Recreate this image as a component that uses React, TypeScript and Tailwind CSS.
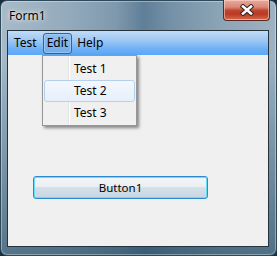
import React from "react";

export default function App() {
  return (
    <div className="w-[277px] h-[256px] bg-[#163041] overflow-hidden font-['Noto_Sans',sans-serif] text-[12px] text-black">
      <div className="relative w-[277px] h-[256px] rounded-[7px] border border-[#30495a] bg-[linear-gradient(180deg,rgba(150,175,192,0)_0%,rgba(150,175,192,0)_22%,rgba(30,70,95,0.6)_100%),linear-gradient(90deg,#a7bac8_0%,#93aabc_25%,#7e98ad_42%,#5f7f98_52%,#7591a7_62%,#8ca4b6_80%,#9eb2c1_100%)] flex flex-col pl-[6px] pr-[7px] pb-[8px] shadow-[inset_0_0_0_1px_rgba(255,255,255,0.35)]">
        {/* title bar */}
        <div className="h-[29px] flex items-start justify-between">
          <div className="pl-[2px] pt-[8px] leading-[14px] text-[12px] [text-shadow:0_0_6px_rgba(255,255,255,0.9),0_0_3px_rgba(255,255,255,0.8)]">
            Form1
          </div>
          <div className="-mt-[1px] -mr-[1px] w-[47px] h-[21px] rounded-b-[4px] border border-[#5a2a22] border-t-0 bg-[linear-gradient(180deg,#e7aa9c_0%,#d98a78_35%,#c4452e_52%,#b83a25_70%,#d86a4c_100%)] shadow-[inset_0_0_0_1px_rgba(255,220,210,0.55)] flex items-center justify-center">
            <svg width="14" height="12" viewBox="0 0 14 12">
              <path d="M3 2.5 L11 9.5 M11 2.5 L3 9.5" stroke="#3b2420" strokeWidth="4.6" strokeLinecap="square" />
              <path d="M3 2.5 L11 9.5 M11 2.5 L3 9.5" stroke="#ffffff" strokeWidth="2.6" strokeLinecap="square" />
            </svg>
          </div>
        </div>
        {/* client area */}
        <div className="relative flex-1 border border-[#26333c] bg-[#f0f0f0] flex flex-col">
          {/* menu bar */}
          <div className="h-[24px] bg-[linear-gradient(180deg,#c2dcf8_0%,#98c4f3_45%,#6eb0f6_75%,#5ca7f7_100%)] flex items-center pl-[2px] gap-[2px]">
            <div className="h-[20px] px-[4px] flex items-center">Test</div>
            <div className="h-[21px] px-[3px] flex items-center rounded-[3px] border border-[#3f6184] bg-[linear-gradient(180deg,#8ebfee_0%,#74adea_100%)] shadow-[inset_0_0_0_1px_rgba(170,210,245,0.6)]">
              Edit
            </div>
            <div className="h-[20px] px-[3px] flex items-center">Help</div>
          </div>

          {/* button */}
          <div className="ml-[25px] mt-[121px] w-[175px] h-[23px] rounded-[3px] border border-[#2a8ad4] shadow-[inset_0_0_0_1px_#66dcfb] bg-[linear-gradient(180deg,#f3f6f8_0%,#ebeff3_45%,#d5e0e8_50%,#c8d6e0_100%)] flex items-center justify-center text-[11.5px]">
            Button1
          </div>

          {/* dropdown menu */}
          <div className="absolute left-[34px] top-[24px] w-[95px] h-[71px] border border-[#979797] bg-[#f0f0f0] shadow-[2px_2px_3px_rgba(0,0,0,0.45)] py-[2px]">
            <div className="absolute left-[25px] top-0 bottom-0 w-[2px] border-l border-[#e2e3e3] after:content-[''] after:absolute after:left-0 after:top-0 after:bottom-0 after:w-px after:bg-white" />
            <div className="relative h-[22px] flex items-center pl-[31px]">Test 1</div>
            <div className="relative h-[22px] mx-[1px] flex items-center pl-[29px] rounded-[3px] border border-[#b4d0f1] bg-[linear-gradient(180deg,#f4f8fd_0%,#e6effb_100%)]">
              Test 2
            </div>
            <div className="relative h-[22px] flex items-center pl-[31px]">Test 3</div>
          </div>
        </div>
      </div>
    </div>
  );
}
